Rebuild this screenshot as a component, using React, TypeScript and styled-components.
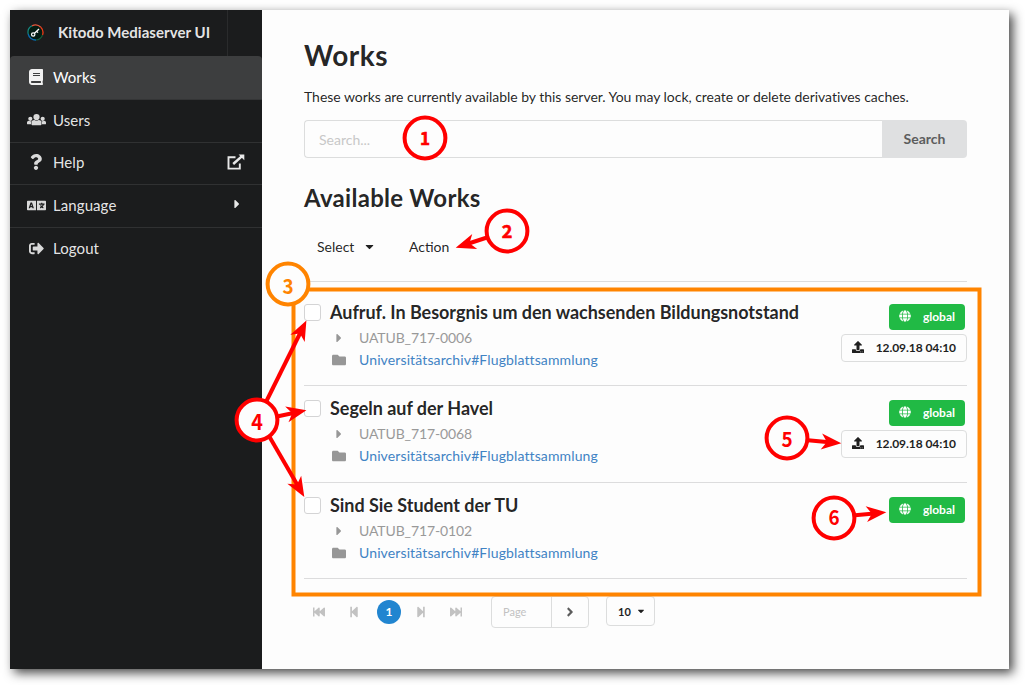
import React from "react";
import styled, { createGlobalStyle } from "styled-components";
import {
  FaAngleRight, FaBook, FaCaretDown, FaCaretRight, FaFastBackward, FaFastForward,
  FaFolder, FaGlobe, FaLanguage, FaQuestion, FaSignOutAlt, FaStepBackward, FaStepForward, FaUpload,
} from "react-icons/fa";

const GlobalStyle = createGlobalStyle`
  * { box-sizing: border-box; }
  body { margin: 0; background: #fff; font-family: Lato, "Liberation Sans", sans-serif; font-size: 14px; color: rgba(0,0,0,.87); }
  h1, h2, h3, p { margin: 0; }
  svg { display: block; flex: none; }
`;

const Page = styled.div`
  position: relative;
  width: 1025px;
  height: 685px;
  padding: 10px;
  overflow: hidden;
`;
const Window = styled.div`
  display: flex;
  width: 999px;
  height: 659px;
  background: #fdfdfd;
  box-shadow: 4px 4px 10px rgba(0, 0, 0, 0.72);
`;
const Sidebar = styled.nav`
  width: 252px;
  background: #1b1c1d;
  color: rgba(255, 255, 255, 0.9);
`;
const Brand = styled.div`
  display: flex;
  align-items: center;
  width: 218px;
  height: 46px;
  padding: 0 0 2px 17px;
  gap: 14px;
  font-size: 15px;
  font-weight: 700;
  letter-spacing: 0.04px;
  border-right: 1px solid #2a2b2c;
`;
const MenuItem = styled.a<{ $active?: boolean }>`
  display: flex;
  align-items: center;
  height: ${(p) => (p.$active ? "44px" : "42.7px")};
  padding: 0 17px 2px 16px;
  font-size: 15px;
  letter-spacing: 0.08px;
  border-bottom: 1px solid ${(p) => (p.$active ? "#343536" : "#303132")};
  background: ${(p) => (p.$active ? "#3d3e3f" : "transparent")};
  color: ${(p) => (p.$active ? "#fff" : "inherit")};
  border-radius: ${(p) => (p.$active ? "4px 4px 0 0" : "0")};
  &:nth-child(4) { padding-bottom: 3px; }
  &:last-child { border-bottom: 0; padding-bottom: 2.5px; }
`;
const MenuIcon = styled.span`
  display: flex;
  justify-content: center;
  width: 20px;
  margin-right: 7px;
  opacity: 0.93;
`;
const MenuText = styled.span`
  flex: 1;
`;
const Submenu = styled.span`
  display: flex;
  justify-content: center;
  width: 16px;
  padding-bottom: 3px;
`;
const Main = styled.main`
  flex: 1;
  padding: 28px 42px 0;
`;
const Title = styled.h1`
  font-size: 28px;
  line-height: 34px;
  font-weight: 700;
  letter-spacing: 0.5px;
`;
const Intro = styled.p`
  margin-top: 15px;
  line-height: 20px;
  letter-spacing: -0.032px;
`;
const SearchBar = styled.form`
  display: flex;
  height: 38px;
  margin-top: 13px;
`;
const SearchInput = styled.input`
  flex: 1;
  min-width: 0;
  padding: 0 14px;
  border: 1px solid #dcdddd;
  border-right: 0;
  border-radius: 4px 0 0 4px;
  background: transparent;
  font: inherit;
  &::placeholder { color: #c8c8c8; }
`;
const SearchButton = styled.button`
  width: 85px;
  padding: 0 0 2px;
  border: 0;
  border-radius: 0 4px 4px 0;
  background: #dfe0e1;
  color: #5c5d5d;
  font: 700 14px Lato, sans-serif;
`;
const Subtitle = styled.h2`
  margin-top: 24px;
  font-size: 24px;
  line-height: 31px;
  font-weight: 700;
  letter-spacing: 0.28px;
`;
const Toolbar = styled.div`
  display: flex;
  align-items: center;
  height: 38px;
  margin-top: 14px;
  padding-left: 13px;
`;
const SelectMenu = styled.span`
  display: flex;
  align-items: center;
  width: 92px;
  gap: 9px;
`;
const WorkList = styled.div`
  margin-top: 16px;
  border-top: 1px solid #dcdcdd;
`;
const WorkRow = styled.article`
  display: flex;
  height: 97px;
  padding-top: 14px;
  border-bottom: 1px solid #dcdcdd;
  &:first-child { height: 104px; padding-top: 22px; }
  &:last-child { height: 96px; }
`;
const Checkbox = styled.span`
  width: 17px;
  height: 17px;
  margin: 0 9px 0 0;
  border: 1px solid #d4d4d5;
  border-radius: 3px;
  background: #fff;
`;
const WorkInfo = styled.div`
  flex: 1;
`;
const WorkTitle = styled.h3`
  margin-top: -3px;
  font-size: 18px;
  line-height: 22px;
  font-weight: 700;
  letter-spacing: -0.03px;
`;
const Meta = styled.div<{ $link?: boolean }>`
  display: flex;
  align-items: center;
  height: 22px;
  margin-top: ${(p) => (p.$link ? "0" : "3px")};
  color: ${(p) => (p.$link ? "#4183c4" : "#999")};
  letter-spacing: ${(p) => (p.$link ? "0.12px" : "-0.12px")};
`;
const MetaIcon = styled.span`
  display: flex;
  justify-content: center;
  width: 17px;
  margin-right: 12px;
  padding-top: 1px;
  color: #979797;
`;
const Labels = styled.div`
  display: flex;
  flex-direction: column;
  align-items: flex-end;
`;
const Label = styled.span<{ $green?: boolean }>`
  display: flex;
  align-items: center;
  justify-content: space-between;
  width: ${(p) => (p.$green ? "76px" : "126px")};
  height: ${(p) => (p.$green ? "26px" : "28px")};
  margin: ${(p) => (p.$green ? "0 2px 4px 0" : "0")};
  padding: 0 10px 1.5px;
  border-radius: 4px;
  font-size: 12px;
  font-weight: 700;
  letter-spacing: ${(p) => (p.$green ? "0" : "-0.07px")};
  background: ${(p) => (p.$green ? "#21ba45" : "#fdfdfd")};
  color: ${(p) => (p.$green ? "#fff" : "#1f1f1f")};
  border: ${(p) => (p.$green ? "0" : "1px solid #dcdddd")};
`;
const Pager = styled.div`
  display: flex;
  align-items: center;
  margin-top: 16px;
  height: 34px;
  color: #c2c2c2;
`;
const PageStep = styled.span<{ $width: number }>`
  display: flex;
  justify-content: center;
  width: ${(p) => p.$width}px;
`;
const CurrentPage = styled.span`
  display: flex;
  align-items: center;
  justify-content: center;
  width: 24px;
  height: 24px;
  margin: 0 4px 0 3px;
  padding-bottom: 2px;
  border-radius: 50%;
  background: #2185d0;
  color: #fff;
  font-size: 12px;
  font-weight: 700;
`;
const PageJump = styled.div`
  display: flex;
  width: 98px;
  height: 32px;
  margin-left: 15px;
  border: 1px solid #dcdddd;
  border-radius: 4px;
  font-size: 11px;
`;
const PageField = styled.span`
  display: flex;
  align-items: center;
  width: 60px;
  padding: 0 0 1px 11px;
  border-right: 1px solid #dcdddd;
`;
const PageGo = styled.span`
  display: flex;
  flex: 1;
  align-items: center;
  justify-content: center;
  color: #5c5c5c;
`;
const PageSize = styled.span`
  display: flex;
  align-items: center;
  gap: 5px;
  width: 49px;
  height: 30px;
  margin: 0 0 2px 17px;
  padding-left: 11px;
  border: 1px solid #dcdddd;
  border-radius: 4px;
  color: #1f1f1f;
  font-size: 11px;
  font-weight: 700;
`;
const Overlay = styled.svg`
  position: absolute;
  left: 0;
  top: 0;
  pointer-events: none;
`;
const MarkerDigit = styled.text`
  font-family: "Noto Sans CJK JP", sans-serif;
  font-weight: 700;
  text-anchor: middle;
`;

const works = [
  { title: "Aufruf. In Besorgnis um den wachsenden Bildungsnotstand", id: "UATUB_717-0006", date: "12.09.18 04:10" },
  { title: "Segeln auf der Havel", id: "UATUB_717-0068", date: "12.09.18 04:10" },
  { title: "Sind Sie Student der TU", id: "UATUB_717-0102", date: "" },
];

const RED = "#f00";
const ORANGE = "#ff8400";
const markers = [
  { n: 1, x: 425, y: 138, base: 145, size: 17, narrow: 1, bold: 0.6, color: RED },
  { n: 2, x: 507, y: 231, base: 238, size: 18, narrow: 1, bold: 0.6, color: RED },
  { n: 3, x: 288, y: 284, base: 293.5, size: 21, narrow: 0.9, bold: 0, color: ORANGE },
  { n: 4, x: 257, y: 420, base: 430, size: 22, narrow: 0.9, bold: 0, color: RED },
  { n: 5, x: 787, y: 438, base: 447, size: 21, narrow: 0.9, bold: 0, color: RED },
  { n: 6, x: 834, y: 518, base: 525, size: 21, narrow: 0.9, bold: 0, color: RED },
];
const arrows = [
  [487, 237.5, 455.7, 247.7],
  [266, 402, 306.4, 320.5],
  [277, 416.5, 306.4, 410.3],
  [269, 436, 304.3, 497],
  [808, 440.2, 841.3, 443.3],
  [855, 515.2, 886.3, 512.3],
];

function Arrow({ at }: { at: number[] }) {
  const [x1, y1, x2, y2] = at;
  const angle = (Math.atan2(y2 - y1, x2 - x1) * 180) / Math.PI;
  const length = Math.hypot(x2 - x1, y2 - y1);
  return (
    <g transform={`translate(${x2} ${y2}) rotate(${angle})`} fill={RED}>
      <path d={`M${-length} 0H-12`} stroke={RED} strokeWidth="4" />
      <path d="M0 0L-20 8L-14.5 0L-20 -8Z" />
    </g>
  );
}

function Logo() {
  return (
    <svg width="17" height="17" viewBox="0 0 17 17" fill="none">
      <circle cx="8.5" cy="8.5" r="7.5" fill="#031c12" />
      <path d="M5 1.8A7.5 7.5 0 0 1 13.8 3.2" stroke="#e8563c" strokeWidth="1.3" />
      <path d="M13.8 3.2A7.5 7.5 0 0 1 15.5 11" stroke="#ee3a16" strokeWidth="1.3" />
      <path d="M15.5 11A7.5 7.5 0 0 1 9 16" stroke="#145b3a" strokeWidth="1.2" />
      <path d="M9 16A7.5 7.5 0 0 1 1.2 10" stroke="#086bb0" strokeWidth="1.3" />
      <path d="M1.2 10A7.5 7.5 0 0 1 5 1.8" stroke="#168a81" strokeWidth="1.2" />
      <circle cx="6.2" cy="10.5" r="1.7" stroke="#fff" strokeWidth="1.2" />
      <path d="M7.5 9.3L12 5M9.6 7.2L11 8.6" stroke="#fff" strokeWidth="1.3" />
    </svg>
  );
}

function UsersIcon() {
  return (
    <svg width="19" height="15.2" viewBox="0 0 640 512" fill="currentColor">
      <circle cx="320" cy="169" r="105" />
      <circle cx="112" cy="230" r="70" />
      <circle cx="528" cy="230" r="70" />
      <path d="M433.463 281.366l-39.982-9.996c-49.168 35.365-108.766 27.473-146.961 0l-39.982 9.996C174.485 289.379 152 318.177 152 351.216V412c0 19.882 16.118 36 36 36h264c19.882 0 36-16.118 36-36v-60.784c0-33.039-22.485-61.837-54.537-69.85z" />
      <path d="M136 412v-60.784c0-16.551 4.593-32.204 12.703-45.599-29.988 14.72-63.336 8.708-85.69-7.37l-26.655 6.664C14.99 310.252 0 329.452 0 351.477V392c0 13.255 10.745 24 24 24h112z" />
      <path d="M504 412v-60.784c0-16.551-4.593-32.204-12.703-45.599 29.988 14.72 63.336 8.708 85.69-7.37l26.655 6.664C625.01 310.252 640 329.452 640 351.477V392c0 13.255-10.745 24-24 24H504z" />
    </svg>
  );
}

function ExternalIcon() {
  return (
    <svg width="18" height="16" viewBox="0 0 18 16" fill="none" stroke="currentColor">
      <path d="M8.5 3.2H1.5V14.6H12.8V9.5" strokeWidth="1.9" />
      <path d="M6.2 10L14.5 2.6" strokeWidth="2.5" />
      <path d="M11.6 0.5H17.3V6.2Z" fill="currentColor" stroke="none" />
    </svg>
  );
}

export default function App() {
  return (
    <>
      <GlobalStyle />
      <Page>
        <Window>
          <Sidebar>
            <Brand><Logo />Kitodo Mediaserver UI</Brand>
            <MenuItem $active><MenuIcon><FaBook size={16} /></MenuIcon><MenuText>Works</MenuText></MenuItem>
            <MenuItem><MenuIcon><UsersIcon /></MenuIcon><MenuText>Users</MenuText></MenuItem>
            <MenuItem><MenuIcon><FaQuestion size={16} /></MenuIcon><MenuText>Help</MenuText><ExternalIcon /></MenuItem>
            <MenuItem><MenuIcon><FaLanguage size={19} /></MenuIcon><MenuText>Language</MenuText><Submenu><FaCaretRight size={14} /></Submenu></MenuItem>
            <MenuItem><MenuIcon><FaSignOutAlt size={15} /></MenuIcon><MenuText>Logout</MenuText></MenuItem>
          </Sidebar>
          <Main>
            <Title>Works</Title>
            <Intro>These works are currently available by this server. You may lock, create or delete derivatives caches.</Intro>
            <SearchBar>
              <SearchInput placeholder="Search..." />
              <SearchButton type="button">Search</SearchButton>
            </SearchBar>
            <Subtitle>Available Works</Subtitle>
            <Toolbar>
              <SelectMenu>Select <FaCaretDown size={13} /></SelectMenu>
              <span>Action</span>
            </Toolbar>
            <WorkList>
              {works.map((work) => (
                <WorkRow key={work.id}>
                  <Checkbox />
                  <WorkInfo>
                    <WorkTitle>{work.title}</WorkTitle>
                    <Meta><MetaIcon><FaCaretRight size={14} /></MetaIcon>{work.id}</Meta>
                    <Meta $link><MetaIcon><FaFolder size={14} /></MetaIcon>Universitätsarchiv#Flugblattsammlung</Meta>
                  </WorkInfo>
                  <Labels>
                    <Label $green><FaGlobe size={12} />global</Label>
                    {work.date && <Label><FaUpload size={12} />{work.date}</Label>}
                  </Labels>
                </WorkRow>
              ))}
            </WorkList>
            <Pager>
              <PageStep $width={30}><FaFastBackward size={12} /></PageStep>
              <PageStep $width={40}><FaStepBackward size={12} /></PageStep>
              <CurrentPage>1</CurrentPage>
              <PageStep $width={31}><FaStepForward size={12} /></PageStep>
              <PageStep $width={40}><FaFastForward size={12} /></PageStep>
              <PageJump><PageField>Page</PageField><PageGo><FaAngleRight size={14} /></PageGo></PageJump>
              <PageSize>10 <FaCaretDown size={10} /></PageSize>
            </Pager>
          </Main>
        </Window>
        <Overlay width="1025" height="685" viewBox="0 0 1025 685">
          <rect x="293.5" y="289.5" width="686" height="305" fill="none" stroke={ORANGE} strokeWidth="4" />
          {arrows.map((at, i) => <Arrow key={i} at={at} />)}
          {markers.map((m) => (
            <g key={m.n}>
              <circle cx={m.x} cy={m.y} r="20.4" fill="#fdfdfd" stroke={m.color} strokeWidth="4" />
              <MarkerDigit
                transform={`translate(${m.x} ${m.base}) scale(${m.narrow} 1)`}
                fontSize={m.size}
                fill={m.color}
                stroke={m.color}
                strokeWidth={m.bold}
              >
                {m.n}
              </MarkerDigit>
            </g>
          ))}
        </Overlay>
      </Page>
    </>
  );
}
